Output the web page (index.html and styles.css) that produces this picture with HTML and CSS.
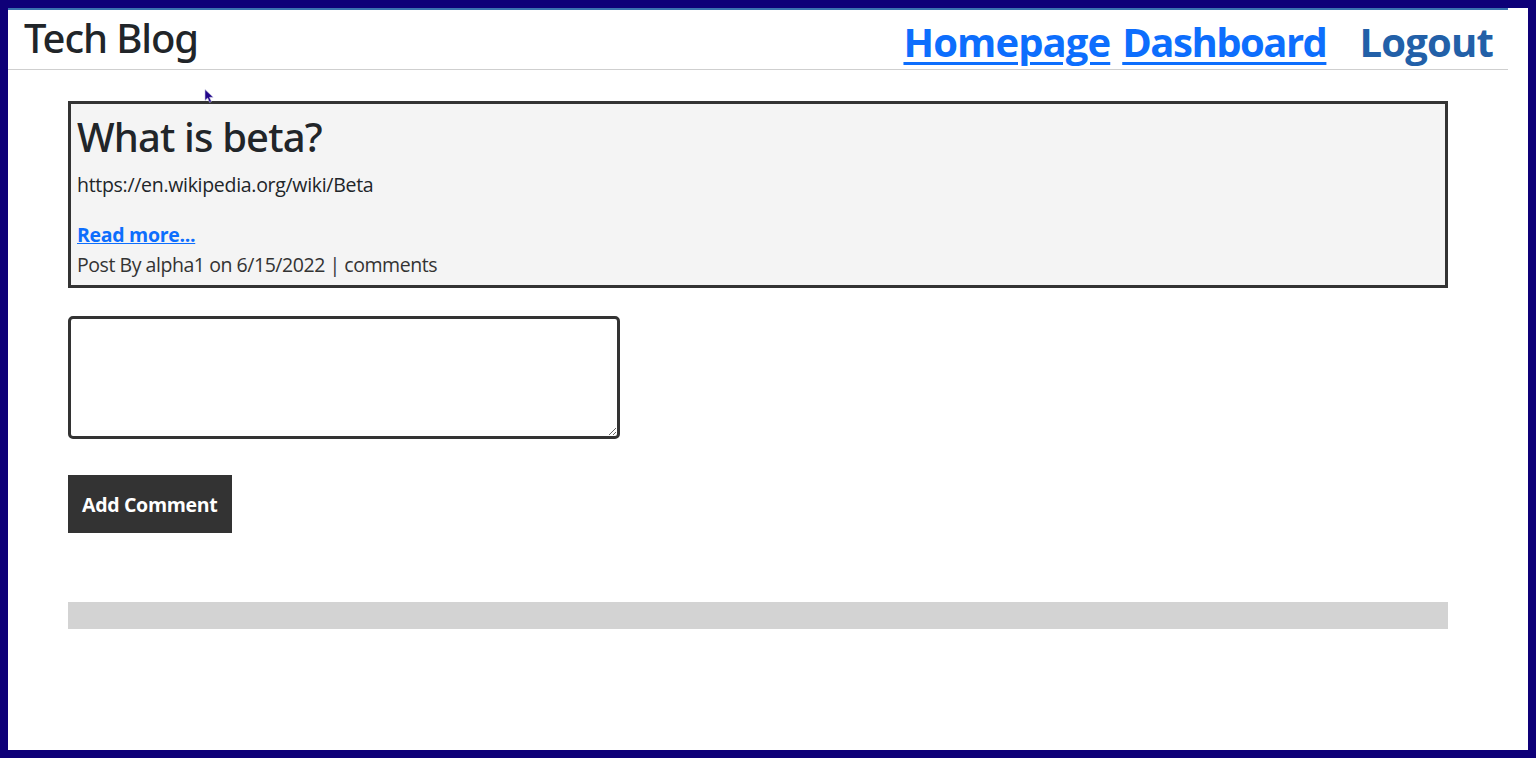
FILE: index.html
```html
<!DOCTYPE html>
<html lang="en">
<head>
<meta charset="utf-8">
<title>Tech Blog</title>
<link rel="stylesheet" href="styles.css">
</head>
<body>
<div class="frame">
  <header class="site-header">
    <h1 class="brand">Tech Blog</h1>
    <nav class="nav">
      <a href="#" class="nav-link nav-home">Homepage</a>
      <a href="#" class="nav-link nav-dash">Dashboard</a>
      <button class="logout" type="button">Logout</button>
    </nav>
  </header>
  <main class="main">
    <div class="container">
      <article class="post">
        <h2 class="post-title">What is beta?</h2>
        <p class="post-body">https://en.wikipedia.org/wiki/Beta</p>
        <a href="#" class="read-more">Read more...</a>
        <div class="post-meta">Post By alpha1 on 6/15/2022 | comments</div>
      </article>
      <form class="comment-form">
        <textarea class="comment-input"></textarea>
        <button type="button" class="comment-btn">Add Comment</button>
      </form>
      <div class="comments-bar"></div>
    </div>
  </main>
  <svg class="cursor" width="12" height="14" viewBox="0 0 12 14"><path d="M1 0.5 L1 11.5 L3.6 9 L5.6 13.4 L7.4 12.6 L5.5 8.3 L9.2 8.2 Z" fill="#21058a" stroke="#c8c8e0" stroke-width="0.6"/></svg>
</div>
</body>
</html>
```

FILE: styles.css
```css
* { box-sizing: border-box; }
html, body { margin: 0; padding: 0; }
body {
  font-family: "Open Sans", "Noto Sans", sans-serif;
  color: #212529;
  background: #0e0078;
}
.frame {
  position: relative;
  height: 758px;
  border: 8px solid #0e0078;
  background: #ffffff;
  overflow: hidden;
}
.site-header {
  display: flex;
  justify-content: space-between;
  align-items: flex-start;
  height: 62px;
  margin-right: 20px;
  padding: 0 15px 0 16px;
  border-top: 2px solid #3a73b0;
  border-bottom: 1px solid #cfcfcf;
}
.brand {
  margin: 4px 0 0 0;
  font-family: "Noto Sans", "Open Sans", sans-serif;
  font-size: 40px;
  font-weight: 500;
  line-height: 48px;
  letter-spacing: -1.1px;
  color: #212529;
}
.nav {
  display: flex;
  align-items: flex-start;
  margin-top: 8px;
}
.nav-link {
  font-size: 40px;
  font-weight: 700;
  line-height: 48px;
  color: #0d6efd;
  text-decoration: underline;
  text-decoration-thickness: 3px;
  text-underline-offset: 5px;
  letter-spacing: -1.2px;
}
.nav-home { margin-right: 12px; letter-spacing: -0.9px; }
.nav-dash { margin-right: 21px; letter-spacing: -1.5px; }
.logout {
  font-family: inherit;
  font-size: 40px;
  font-weight: 700;
  line-height: 48px;
  color: #2260a8;
  background: none;
  border: 0;
  padding: 0 0 0 12px;
  letter-spacing: -0.8px;
  cursor: pointer;
}
.main {
  margin-right: 20px;
  padding-top: 31px;
}
.container {
  width: 92%;
  margin: 0 auto;
}
.post {
  border: 3px solid #333333;
  background: #f4f4f4;
  padding: 9px 8px 5px 6px;
}
.post-title {
  margin: 0 0 9px 0;
  font-family: "Noto Sans", "Open Sans", sans-serif;
  font-size: 40px;
  font-weight: 500;
  line-height: 48px;
  letter-spacing: -0.85px;
  color: #212529;
}
.post-body {
  margin: 0 0 20px 0;
  font-size: 19.5px;
  line-height: 30px;
  letter-spacing: -0.3px;
}
.read-more {
  display: block;
  font-size: 19.5px;
  font-weight: 700;
  line-height: 30px;
  color: #0d6efd;
  text-decoration: underline;
  letter-spacing: -0.3px;
}
.post-meta {
  font-size: 19.5px;
  line-height: 30px;
  letter-spacing: -0.45px;
  color: #333333;
}
.comment-form {
  display: flex;
  flex-direction: column;
  align-items: flex-start;
  margin-top: 28px;
}
.comment-input {
  width: 552px;
  height: 123px;
  border: 3px solid #333333;
  border-radius: 5px;
  background: #ffffff;
  resize: both;
  font-family: inherit;
}
.comment-btn {
  margin-top: 36px;
  height: 58px;
  padding: 0 14px;
  background: #333333;
  color: #ffffff;
  border: 0;
  font-family: inherit;
  font-size: 19.5px;
  font-weight: 700;
  letter-spacing: -0.3px;
}
.comments-bar {
  margin-top: 69px;
  height: 27px;
  background: #d3d3d3;
}
.cursor {
  position: absolute;
  left: 196px;
  top: 81px;
}
```
